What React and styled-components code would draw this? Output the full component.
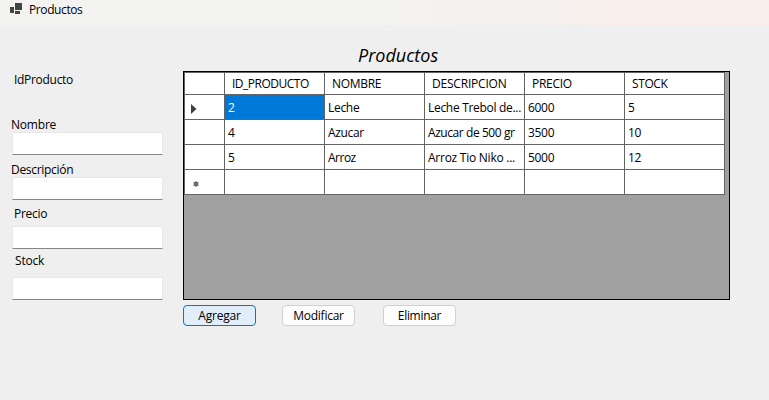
import React from "react";
import styled, { createGlobalStyle } from "styled-components";

const GlobalStyle = createGlobalStyle`
  * { box-sizing: border-box; }
  html, body { margin: 0; background: #efefef; overflow: hidden; }
  button, input { font: inherit; color: inherit; }
`;

const Window = styled.main`
  width: 769px;
  height: 400px;
  background: #efefef;
  color: #000;
  font: 12px/16px "Open Sans", "Noto Sans", sans-serif;
`;

const TitleBar = styled.header`
  display: flex;
  height: 25px;
  padding: 2px 0 0 10px;
  background: linear-gradient(90deg, #f3f3f1 0%, #f3f3f1 50%, #f4f1ee 70%, #f9efec 82%, #f9efec 100%);
`;

const AppIcon = styled.svg`
  display: block;
  width: 13px;
  height: 12px;
  margin: 1px 6px 0 0;
`;

const Fitted = styled.span`
  display: block;
  white-space: pre;
  letter-spacing: ${(p) => p.$track || 0}px;
`;

const Content = styled.div`
  display: flex;
`;

const Sidebar = styled.form`
  width: 183px;
  padding: 47px 0 0 12px;
`;

const Label = styled.label`
  display: block;
  height: 16px;
  margin: ${(p) => p.$top}px 0 0 ${(p) => p.$left}px;
`;

const Input = styled.input`
  display: block;
  width: 151px;
  height: 23px;
  margin: ${(p) => p.$top}px 0 0;
  padding: 0 4px;
  border: 1px solid #e8e8e8;
  border-bottom-color: #858585;
  border-radius: 1px;
  background: #fff;
  outline: none;
`;

const Main = styled.section`
  width: 547px;
`;

const Heading = styled.h1`
  height: 46px;
  margin: 0;
  padding: 18px 0 0 175px;
  font-size: 18px;
  line-height: 24px;
  font-weight: 400;
  font-style: italic;
`;

const GridView = styled.div`
  height: 229px;
  border: 1px solid #000;
  background: #a0a0a0;
`;

const Table = styled.div`
  width: 541px;
  border: solid #646464;
  border-width: 1px 0 0 1px;
`;

const Row = styled.div`
  display: grid;
  grid-template-columns: 40px repeat(5, 100px);
  height: ${(p) => (p.$header ? 22 : 25)}px;
`;

const Cell = styled.div`
  display: flex;
  align-items: center;
  min-width: 0;
  padding: ${(p) => (p.$header ? "0 0 0 7px" : "2px 0 0 3px")};
  overflow: hidden;
  border: solid #646464;
  border-width: 0 1px 1px 0;
  background: ${(p) => (p.$selected ? "#0078d7" : "#fff")};
  color: ${(p) => (p.$selected ? "#fff" : "#000")};
`;

const Marker = styled.svg`
  display: block;
  width: 10px;
  height: 10px;
  margin: ${(p) => p.$top}px 0 0 2px;
`;

const Actions = styled.div`
  display: grid;
  grid-template-columns: 99px 101px 73px;
  padding-top: 5px;
`;

const Button = styled.button`
  display: flex;
  justify-content: center;
  align-items: center;
  width: 73px;
  height: 21px;
  padding: 0;
  border: 1px solid ${(p) => (p.$active ? "#0078d4" : "#d0d0d0")};
  border-radius: 4px;
  background: ${(p) => (p.$active ? "#e0eef9" : "#fdfdfd")};
`;

const fields = [
  { label: "Nombre", top: 29, left: -1, gap: -1, track: -0.2 },
  { label: "Descripción", top: 7, left: -1, gap: -1, track: -0.3 },
  { label: "Precio", top: 6, left: 2, gap: 4, track: -0.3 },
  { label: "Stock", top: 4, left: 3, gap: 8, track: -0.2 },
];

const columns = [
  ["ID_PRODUCTO", -0.5],
  ["NOMBRE", -0.3],
  ["DESCRIPCION", -0.2],
  ["PRECIO", -0.3],
  ["STOCK", -0.4],
];

const rows = [
  ["2", "Leche", "Leche Trebol de...", "6000", "5"],
  ["4", "Azucar", "Azucar de 500 gr", "3500", "10"],
  ["5", "Arroz", "Arroz Tio Niko ...", "5000", "12"],
  ["", "", "", "", ""],
];

const tracking = { "Azucar de 500 gr": -0.43, Azucar: -0.35, Arroz: -0.5, "Arroz Tio Niko ...": -0.25 };

function RowMarker({ index }) {
  if (index === 0)
    return (
      <Marker viewBox="0 0 10 10" $top={1}>
        <path d="M1 0L6.5 5L1 10Z" fill="#404040" />
      </Marker>
    );
  if (index === 3)
    return (
      <Marker viewBox="0 0 10 10" $top={2}>
        <circle cx="6" cy="5" r="2.3" fill="#505050" />
        <path d="M6 2v6M3.3 3.5l5.4 3M8.7 3.5l-5.4 3" stroke="#707070" />
      </Marker>
    );
  return null;
}

export default function App() {
  return (
    <Window>
      <GlobalStyle />
      <TitleBar>
        <AppIcon viewBox="0 0 13 12">
          <path d="M5 0h7v7H5zM0 4h4v6H0zM5 8h5v3H5z" fill="#444" />
        </AppIcon>
        <Fitted $track={-0.4}>Productos</Fitted>
      </TitleBar>
      <Content>
        <Sidebar>
          <Label $top={0} $left={2}>
            <Fitted $track={-0.3}>IdProducto</Fitted>
          </Label>
          {fields.map((f) => (
            <React.Fragment key={f.label}>
              <Label $top={f.top} $left={f.left} htmlFor={f.label}>
                <Fitted $track={f.track}>{f.label}</Fitted>
              </Label>
              <Input id={f.label} $top={f.gap} />
            </React.Fragment>
          ))}
        </Sidebar>
        <Main>
          <Heading>
            <Fitted $track={0}>Productos</Fitted>
          </Heading>
          <GridView>
            <Table>
              <Row $header>
                <Cell $header />
                {columns.map(([name, track]) => (
                  <Cell key={name} $header>
                    <Fitted $track={track}>{name}</Fitted>
                  </Cell>
                ))}
              </Row>
              {rows.map((row, r) => (
                <Row key={r}>
                  <Cell>
                    <RowMarker index={r} />
                  </Cell>
                  {row.map((value, c) => (
                    <Cell key={c} $selected={r === 0 && c === 0}>
                      <Fitted $track={tracking[value] ?? -0.3}>{value}</Fitted>
                    </Cell>
                  ))}
                </Row>
              ))}
            </Table>
          </GridView>
          <Actions>
            <Button $active>
              <Fitted $track={-0.2}>Agregar</Fitted>
            </Button>
            <Button>
              <Fitted $track={-0.25}>Modificar</Fitted>
            </Button>
            <Button>
              <Fitted $track={-0.3}>Eliminar</Fitted>
            </Button>
          </Actions>
        </Main>
      </Content>
    </Window>
  );
}
